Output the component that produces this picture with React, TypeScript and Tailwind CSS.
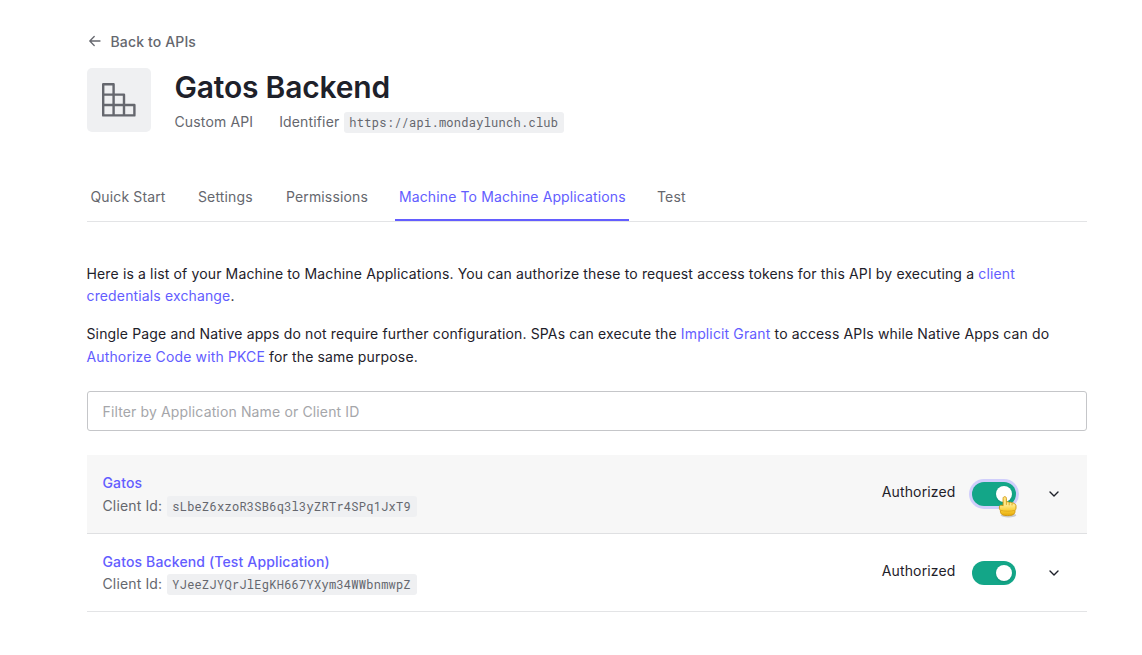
import React from 'react';

function Code({ children }: { children: string }) {
  return (
    <code className="inline-block h-[21px] rounded-[3px] bg-[#eff0f2] pl-[5px] pr-[6px] font-['Roboto_Mono','DejaVu_Sans_Mono',monospace] text-[12px] leading-[21px] tracking-[0.26px] text-[#65676e]">
      {children}
    </code>
  );
}

function Link({ children }: { children: string }) {
  return <a className="text-[#635dff]">{children}</a>;
}

function HandCursor() {
  return (
    <svg className="absolute left-[25.5px] top-[13px]" width="21" height="24" viewBox="0 0 21 24" fill="none">
      <defs>
        <linearGradient id="gold" x1="0" y1="0" x2="0" y2="1">
          <stop offset="0" stopColor="#ffe680" />
          <stop offset="0.45" stopColor="#ffe98a" />
          <stop offset="0.75" stopColor="#f9cb2e" />
          <stop offset="1" stopColor="#e3a80c" />
        </linearGradient>
      </defs>
      <ellipse cx="10.5" cy="20.3" rx="7.8" ry="2.2" fill="#000" opacity="0.18" />
      <path
        d="M5.1 10.8V3.3c0-2.2 3.3-2.2 3.3 0v3.9c.6-.7 2.4-.6 2.8.4.6-.7 2.4-.5 2.8.5.7-.5 2-.2 2.4.7 1 .2 1.6.9 1.6 1.9v2.6c0 1-.6 1.4-.9 2l-.2 1.9c-.4 2.1-2.4 3.4-7.2 3.4s-6.8-1.300-7.200-3.400l-.2-1.900c-.3-.6-.9-1-.9-2v-1.500c0-1.700 2.300-2 3.700-1z"
        fill="url(#gold)"
        stroke="#cf950c"
        strokeWidth="0.9"
      />
      <path d="M8.4 7.400v2.500M11.200 8v2.300M14 8.400v2" stroke="#d49a12" strokeWidth="0.8" />
      <path d="M2.600 15.300c3 1.200 11.400 1.200 14.200 0" stroke="#dca41a" strokeWidth="0.8" />
    </svg>
  );
}

function AppRow({ name, id, active }: { name: string; id: string; active?: boolean }) {
  return (
    <div
      className={
        active
          ? 'flex h-[79px] items-start justify-between border-b border-[#dfe0e2] bg-[#f7f7f7] pl-4 pr-[27.5px] pt-[17px]'
          : 'flex h-[78px] items-start justify-between border-b border-[#e3e4e6] pl-4 pr-[27.5px] pt-[17px]'
      }
    >
      <div>
        <div className="h-[22px] font-medium leading-[22px] text-[#635dff]">{name}</div>
        <div className={active ? 'mt-[2px] flex gap-[5px] text-[#65676e]' : 'mt-px flex gap-[5px] text-[#65676e]'}>
          <span className="leading-[19px]">Client Id:</span>
          <Code>{id}</Code>
        </div>
      </div>
      <div className="flex pt-[9px]">
        <span className="mr-[16.5px] leading-[22px]">Authorized</span>
        <div
          className={
            active
              ? 'relative mt-px flex h-6 w-11 items-center justify-end rounded-full bg-[#13a688] pr-[4px] ring-3 ring-[#d0cefb]'
              : 'relative mt-px flex h-6 w-11 items-center justify-end rounded-full bg-[#13a688] pr-[4px]'
          }
        >
          <span className="size-4 rounded-full bg-white shadow-sm" />
          {active && <HandCursor />}
        </div>
        <svg className="ml-[33px] mt-[9px]" width="10" height="8" viewBox="0 0 10 8" fill="none" stroke="#1e212a" strokeWidth="1.4" strokeLinecap="round" strokeLinejoin="round">
          <path d="M1 2l4 4 4-4" />
        </svg>
      </div>
    </div>
  );
}

const tabs = [
  { label: 'Quick Start', width: 'w-[83.5px]' },
  { label: 'Settings', width: 'w-16' },
  { label: 'Permissions', width: 'w-[89px]' },
  { label: 'Machine To Machine Applications', width: 'w-[234px]', active: true },
  { label: 'Test', width: 'w-10' },
];

export default function App() {
  return (
    <div className="h-[655px] bg-white pl-[86.5px] pt-[31px] font-['Inter',sans-serif] text-[14px] tracking-[0.14px] text-[#1e212a]">
      <div className="w-[1000px]">
        <a className="flex h-[22px] items-center font-medium leading-[22px] text-[#65676e]">
          <svg className="mb-[2px] ml-[2.5px] mr-[9.5px]" width="12" height="12" viewBox="0 0 12 12" fill="none" stroke="currentColor" strokeWidth="1.3" strokeLinecap="round" strokeLinejoin="round">
            <path d="M11 6H1M5.2 1.5L.8 6l4.400 4.500" />
          </svg>
          Back to APIs
        </a>

        <header className="mt-[15px] flex h-16">
          <div className="flex size-16 items-center justify-center rounded-[5px] bg-[#eff0f2]">
            <svg width="36" height="36" viewBox="0 0 36 36" fill="none" stroke="#65676e" strokeWidth="2.4" strokeLinejoin="round">
              <path d="M2.200 2.200h10.400v31.200H2.200zM2.200 12.600h20.800v20.800M2.200 23h31.200v10.400H2.200" />
            </svg>
          </div>
          <div className="ml-6">
            <h1 className="h-[38px] text-[30px] font-semibold leading-[38px] tracking-[-0.2px]">Gatos Backend</h1>
            <div className="mt-[6px] flex h-[21px] text-[#65676e]">
              <span className="mr-[26px] leading-[19px]">Custom API</span>
              <span className="mr-[5px] leading-[19px]">Identifier</span>
              <Code>https://api.mondaylunch.club</Code>
            </div>
          </div>
        </header>

        <nav className="mt-[42px] flex h-12 gap-6 border-b border-[#e3e4e6]">
          {tabs.map((t) => (
            <a
              key={t.label}
              className={
                t.active
                  ? `${t.width} h-[47px] whitespace-nowrap border-b-2 border-[#635dff] px-1 pt-3 leading-[22px] tracking-[0.12px] text-[#635dff]`
                  : `${t.width} h-[47px] whitespace-nowrap px-1 pt-3 leading-[22px] text-[#65676e]`
              }
            >
              {t.label}
            </a>
          ))}
        </nav>

        <p className="mt-[41px] leading-[22.4px]">
          Here is a list of your Machine to Machine Applications. You can authorize these to request access tokens for this API by executing a <Link>client credentials exchange</Link>.
        </p>
        <p className="mt-[15.6px] leading-[22.4px]">
          Single Page and Native apps do not require further configuration. SPAs can execute the <Link>Implicit Grant</Link> to access APIs while Native Apps can do <Link>Authorize Code with PKCE</Link> for the same purpose.
        </p>

        <input
          className="mt-[22.8px] block h-10 w-full rounded-[3px] border border-[#c5c6c9] px-[15px] tracking-[0.14px] outline-none placeholder:text-[#a5a6aa]"
          placeholder="Filter by Application Name or Client ID"
        />

        <div className="mt-6">
          <AppRow name="Gatos" id="sLbeZ6xzoR3SB6q3l3yZRTr4SPq1JxT9" active />
          <AppRow name="Gatos Backend (Test Application)" id="YJeeZJYQrJlEgKH667YXym34WWbnmwpZ" />
        </div>
      </div>
    </div>
  );
}
